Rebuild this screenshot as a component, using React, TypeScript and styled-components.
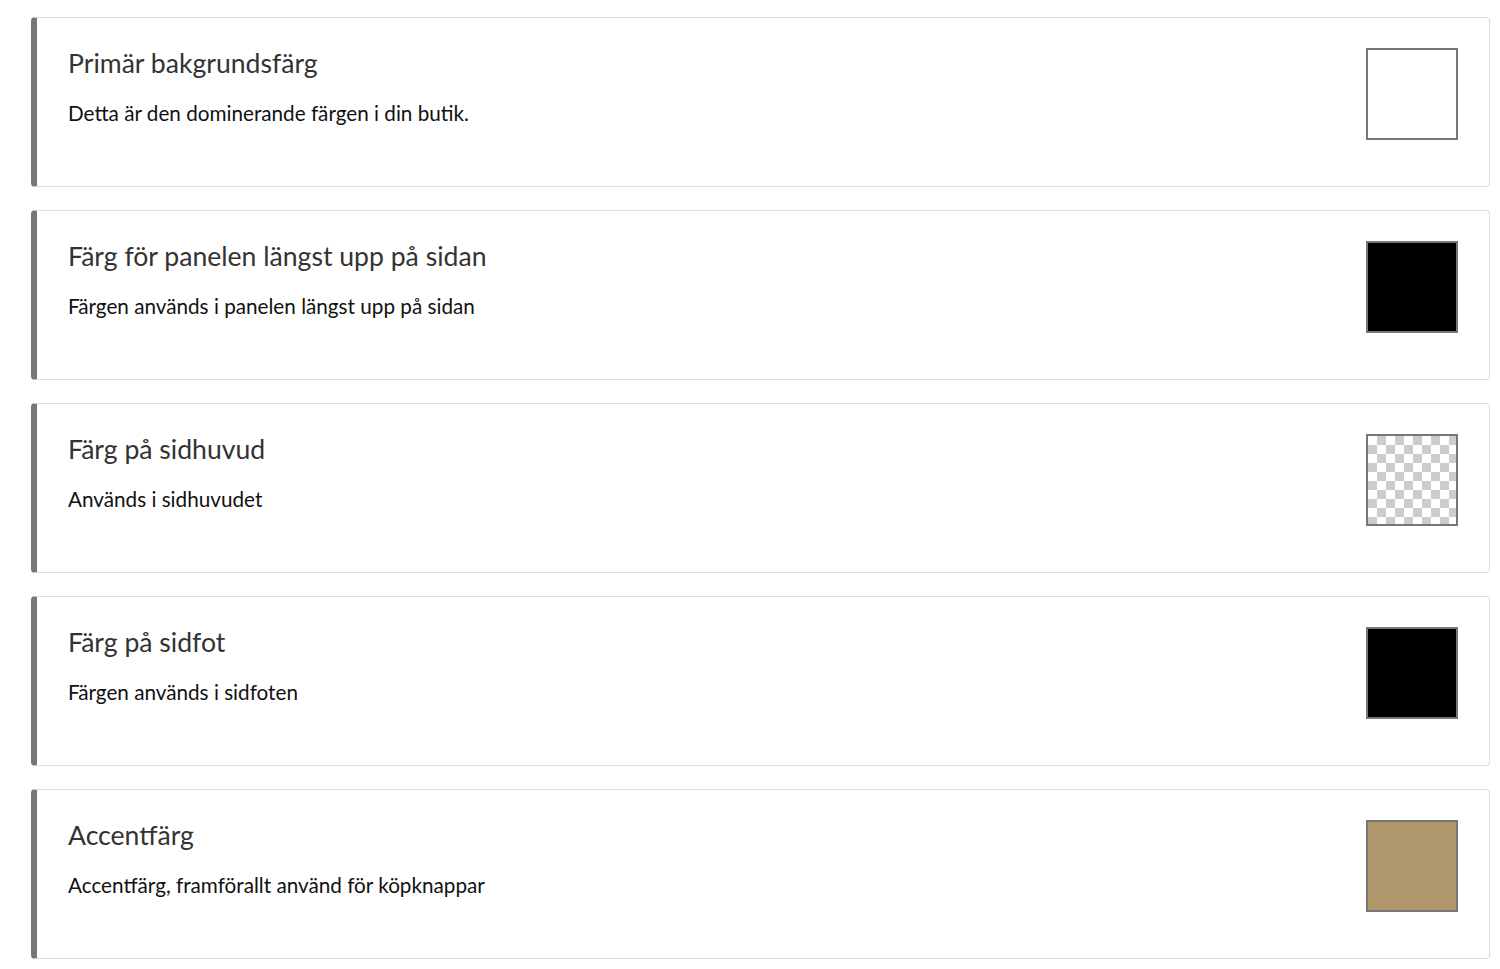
import React from 'react';
import styled, { createGlobalStyle } from 'styled-components';

const GlobalStyle = createGlobalStyle`
  body {
    margin: 0;
    background: #fff;
    font-family: Lato, "Liberation Sans", sans-serif;
  }
`

const List = styled.div`
  display: flex;
  flex-direction: column;
  gap: 23px;
  padding: 17px 10px 0 31px;
`

const Card = styled.div`
  display: flex;
  justify-content: space-between;
  align-items: flex-start;
  height: 170px;
  box-sizing: border-box;
  border: 1px solid #dcdcdc;
  border-left: 6px solid #777;
  border-radius: 4px;
  padding: 29px 31px 0 31px;
  background: #fff;
`

const Text = styled.div`
  display: flex;
  flex-direction: column;
`

const Title = styled.h3`
  margin: 0;
  font-size: 26.6px;
  font-weight: 400;
  line-height: 32px;
  color: #333;
`

const Description = styled.p`
  margin: 22px 0 0;
  font-size: 20.7px;
  line-height: 24px;
  color: #111;
`

const Swatch = styled.div<{ $color?: string }>`
  width: 92px;
  height: 92px;
  margin-top: 1px;
  box-sizing: border-box;
  border: 2px solid #777;
  flex-shrink: 0;
  background: ${p => p.$color ?? `
    repeating-conic-gradient(#ccc 0 25%, #fff 0 50%) 0 0 / 18px 18px
  `};
`

type Setting = {
  title: string
  description: string
  color?: string
}

const settings: Setting[] = [
  { title: 'Primär bakgrundsfärg', description: 'Detta är den dominerande färgen i din butik.', color: '#fff' },
  { title: 'Färg för panelen längst upp på sidan', description: 'Färgen används i panelen längst upp på sidan', color: '#000' },
  { title: 'Färg på sidhuvud', description: 'Används i sidhuvudet' },
  { title: 'Färg på sidfot', description: 'Färgen används i sidfoten', color: '#000' },
  { title: 'Accentfärg', description: 'Accentfärg, framförallt använd för köpknappar', color: '#b0966b' },
]

const App = () => {
  return (
    <>
      <GlobalStyle/>
      <List>
        {settings.map(s => (
          <Card key={s.title}>
            <Text>
              <Title>{s.title}</Title>
              <Description>{s.description}</Description>
            </Text>
            <Swatch $color={s.color}/>
          </Card>
        ))}
      </List>
    </>
  );
};

export default App;
